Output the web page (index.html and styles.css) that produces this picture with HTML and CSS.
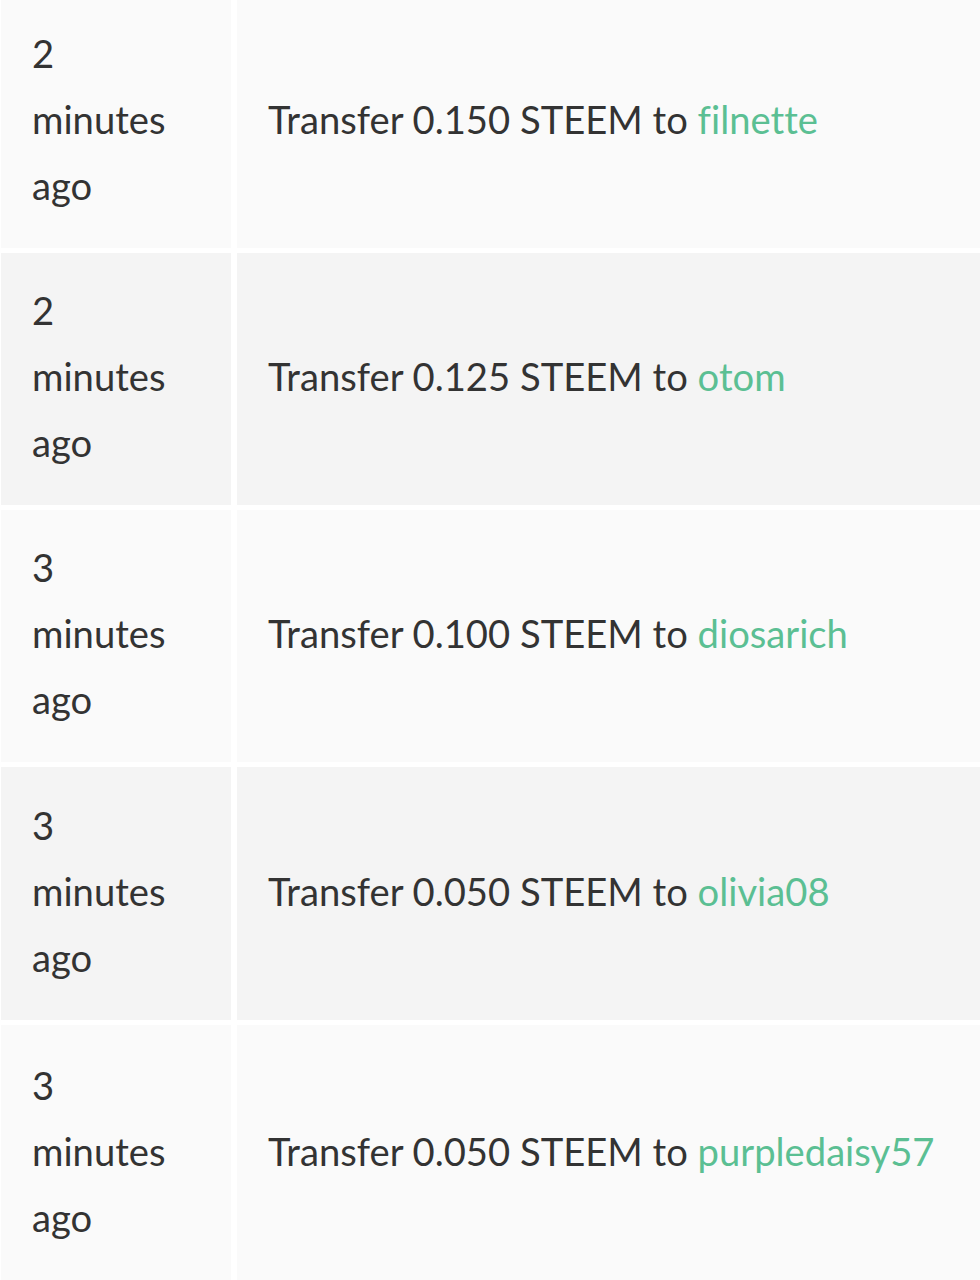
FILE: index.html
```html
<!DOCTYPE html>
<html lang="en">
<head>
    <meta charset="UTF-8">
    <meta name="viewport" content="width=device-width, initial-scale=1.0">
    <title>Transfers</title>
    <link rel="stylesheet" href="styles.css">
</head>
<body>
    <table class="history">
        <tbody>
            <tr>
                <td class="time"><span>2 minutes ago</span></td>
                <td class="op">Transfer 0.150 STEEM to <a href="#">filnette</a></td>
            </tr>
            <tr>
                <td class="time"><span>2 minutes ago</span></td>
                <td class="op">Transfer 0.125 STEEM to <a href="#">otom</a></td>
            </tr>
            <tr>
                <td class="time"><span>3 minutes ago</span></td>
                <td class="op">Transfer 0.100 STEEM to <a href="#">diosarich</a></td>
            </tr>
            <tr>
                <td class="time"><span>3 minutes ago</span></td>
                <td class="op">Transfer 0.050 STEEM to <a href="#">olivia08</a></td>
            </tr>
            <tr>
                <td class="time"><span>3 minutes ago</span></td>
                <td class="op">Transfer 0.050 STEEM to <a href="#">purpledaisy57</a></td>
            </tr>
        </tbody>
    </table>
</body>
</html>
```

FILE: styles.css
```css
:root {
    --text-color: #333333;
    --link-color: #5bbf93;
    --row-odd: #fafafa;
    --row-even: #f4f4f4;
}

* { box-sizing: border-box; }

body {
    margin: 0;
    background: #ffffff;
    font-family: 'Lato', 'Liberation Sans', sans-serif;
    font-size: 38.2px;
    line-height: 66px;
    font-variant-ligatures: none;
    color: var(--text-color);
    overflow: hidden;
}

.history {
    border-collapse: separate;
    border-spacing: 6px 5px;
    margin: -9px 0 0 -5px;
    width: calc(100% + 11px);
}

.history tr:nth-child(odd) td { background: var(--row-odd); }
.history tr:nth-child(even) td { background: var(--row-even); }

.history td {
    height: 252px;
    padding: 24px 30px 30px 31px;
    vertical-align: middle;
}

.history tr:nth-child(n+4) td { height: 253px; }
.history tr:last-child td { height: 262px; padding-bottom: 34px; }

.history td.time { width: 230px; }
.history td.time span { display: block; width: min-content; }

.history a {
    color: var(--link-color);
    text-decoration: none;
}
```
